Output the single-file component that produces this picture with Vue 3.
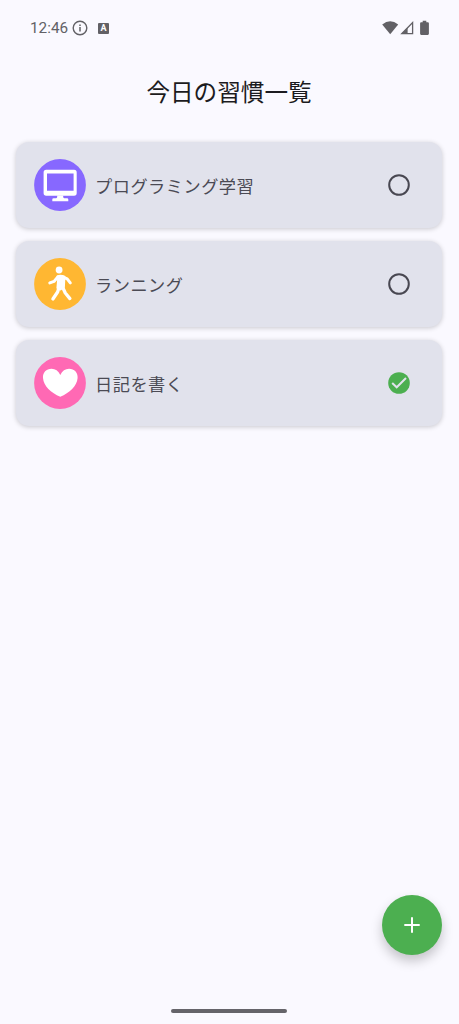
<script setup>
const habits = [
  { name: 'プログラミング学習', icon: 'monitor', color: '#8768ff', done: false },
  { name: 'ランニング', icon: 'walk', color: '#ffb732', done: false },
  { name: '日記を書く', icon: 'heart', color: '#ff69b4', done: true },
]
</script>

<template>
  <div class="screen">
    <header class="status">
      <span class="time">12:46</span>
      <svg class="info" width="16" height="16" viewBox="0 0 16 16">
        <circle cx="8" cy="8" r="6.8" fill="none" stroke="currentColor" stroke-width="1.4" />
        <path d="M8 7.1v4.3M8 4.4v1.5" stroke="currentColor" stroke-width="1.5" />
      </svg>
      <span class="badge">A</span>
      <svg class="signals" width="50" height="16" viewBox="0 0 50 16" fill="currentColor">
        <path d="M0.2 4.4Q8.2-2 16.2 4.4L8.2 14.3Z" />
        <path d="M30.6 2.6V13.7H19.8Z" fill="none" stroke="currentColor" stroke-width="1.3" />
        <path d="M19.8 13.7L25.6 7.8V13.7Z" />
        <path d="M40.7 0.8h3.6v1.4h1.5q1.1 0 1.1 1.1v10.5q0 1.1-1.1 1.1h-6.6q-1.1 0-1.1-1.1v-10.5q0-1.1 1.1-1.1h1.5Z" />
      </svg>
    </header>

    <h1>今日の習慣一覧</h1>

    <main class="list">
      <section v-for="habit in habits" :key="habit.name" class="card">
        <svg class="avatar" width="52" height="52" viewBox="0 0 52 52">
          <circle cx="26" cy="26" r="25.9" :fill="habit.color" />
          <g v-if="habit.icon === 'monitor'" fill="#fff">
            <path fill-rule="evenodd" d="M12.2 10.8h27.9q2.6 0 2.6 2.6v20.7q0 2.6-2.6 2.6h-27.9q-2.6 0-2.6-2.6V13.4q0-2.6 2.6-2.6ZM13 14.4V31.8H39.6V14.4Z" />
            <path d="M23.2 36.5h6v1.6q0 1.1 1.1 1.1h2.7q1.3 0 1.3 1.3v1.7h-16v-1.7q0-1.3 1.3-1.3h2.5q1.1 0 1.1-1.1Z" />
          </g>
          <g v-else-if="habit.icon === 'walk'" fill="none" stroke="#fff" stroke-linecap="round" stroke-linejoin="round">
            <circle cx="25.1" cy="12" r="3.4" fill="#fff" stroke="none" />
            <path d="M15.8 24.9L20 23.4 24 18.8" stroke-width="3" />
            <path d="M28.5 18.8L33.2 20.8 36.3 24.9" stroke-width="3" />
            <path d="M23.5 18.3Q26.5 17 30.5 18.7L30 29 26.5 31.5 23.3 30 24 22Z" fill="#fff" stroke-width="1.8" />
            <path d="M24.8 30.2L23.6 34 18.9 41M29 30L31.3 35 35.9 40.6" stroke-width="3.3" />
          </g>
          <path v-else fill="#fff" d="M26.3 17.9C28.2 13.8 31.3 11.7 35 11.7C40.3 11.7 44 15.5 43.6 21C43 29.2 35.5 36 26.3 39.7C17 36 9.6 29.2 9 21C8.6 15.5 12.3 11.7 17.6 11.7C21.3 11.7 24.4 13.8 26.3 17.9Z" />
        </svg>
        <span class="name">{{ habit.name }}</span>
        <svg class="check" width="24" height="24" viewBox="0 0 24 24">
          <g v-if="habit.done">
            <circle cx="12" cy="12" r="10.8" fill="#4caf50" />
            <path d="M5.2 12L9.7 16.3 19 7" fill="none" stroke="#e1e2ec" stroke-width="2" />
          </g>
          <circle v-else cx="12" cy="12" r="9.8" fill="none" stroke="#484751" stroke-width="2" />
        </svg>
      </section>
    </main>

    <button class="fab" aria-label="追加">
      <svg width="16" height="16" viewBox="0 0 16 16">
        <path d="M8 .3V15.7M.3 8H15.7" stroke="#fff" stroke-width="2" />
      </svg>
    </button>
    <div class="home-bar"></div>
  </div>
</template>

<style>
body {
  background: #faf9ff;
}
</style>

<style scoped>
.screen {
  box-sizing: border-box;
  width: 459px;
  height: 1024px;
  padding: 0 17px 11px 16px;
  display: flex;
  flex-direction: column;
  overflow: hidden;
  background: #faf9ff;
  font-family: "Liberation Sans", "Noto Sans CJK JP", sans-serif;
}

.status {
  height: 56px;
  padding: 0 10px 0 14px;
  display: flex;
  align-items: center;
  color: #626166;
}

.time {
  width: 38px;
  font: 15.3px/20px Roboto, sans-serif;
  white-space: nowrap;
}

.info {
  margin-left: 4px;
}

.badge {
  width: 11px;
  height: 11px;
  margin-left: 10px;
  border-radius: 1px;
  background: #626166;
  color: #fff;
  font: bold 9px/11px Roboto, sans-serif;
  text-align: center;
}

.signals {
  margin-left: auto;
}

h1 {
  margin: 15px 0 0;
  height: 40px;
  color: #1c1b20;
  font: 400 23.6px/40px "Noto Sans CJK JP", sans-serif;
  text-align: center;
}

.list {
  display: flex;
  flex-direction: column;
  gap: 13px;
  margin-top: 31px;
}

.card {
  box-sizing: border-box;
  height: 86px;
  padding: 0 31px 0 18px;
  display: flex;
  align-items: center;
  border-radius: 13px;
  background: #e1e2ec;
  box-shadow: 0 1px 5px rgba(0, 0, 0, 0.2);
}

.avatar {
  flex: none;
}

.name {
  margin: 2px 0 0 9px;
  color: #4b4a54;
  font: 17.2px/26px "Noto Sans CJK JP", sans-serif;
  letter-spacing: 0.5px;
}

.check {
  margin-left: auto;
}

.fab {
  width: 60px;
  height: 60px;
  margin: auto 0 54px auto;
  padding: 0;
  display: flex;
  align-items: center;
  justify-content: center;
  border: 0;
  border-radius: 50%;
  background: #4caf50;
  box-shadow: 0 6px 12px rgba(0, 0, 0, 0.22);
}

.home-bar {
  width: 116px;
  height: 4px;
  flex: none;
  align-self: center;
  border-radius: 2px;
  background: #65646a;
}
</style>
